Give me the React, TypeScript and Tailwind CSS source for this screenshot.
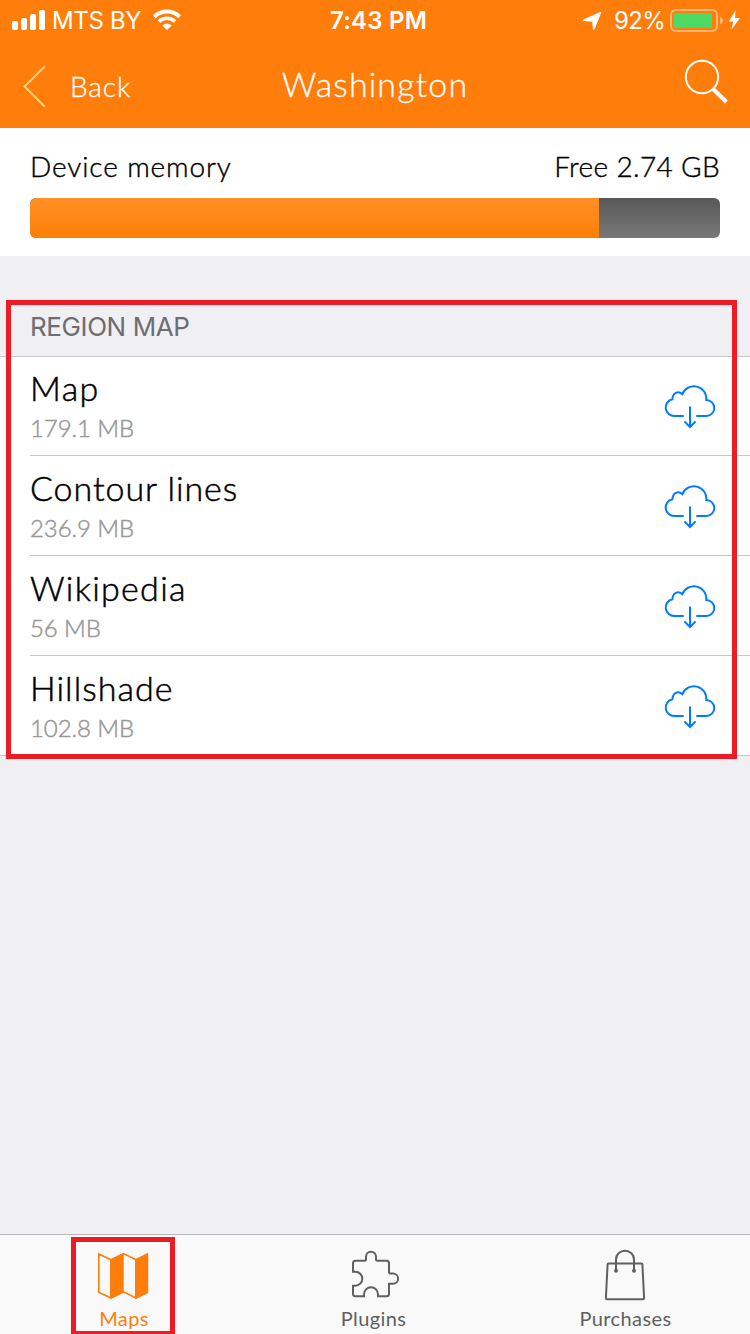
import type { ReactNode } from "react";

const LATO = "font-['Lato','Open_Sans',sans-serif]";
const INTER = "font-['Inter','Liberation_Sans',sans-serif]";

const regions = [
  { name: "Map", size: "179.1 MB", track: "tracking-[1.4px]" },
  { name: "Contour lines", size: "236.9 MB", track: "tracking-[0.95px]" },
  { name: "Wikipedia", size: "56 MB", track: "tracking-[1.3px]" },
  { name: "Hillshade", size: "102.8 MB", track: "tracking-[1.05px]" },
];

function StatusBar() {
  return (
    <div className={`flex h-10 items-center text-[24px] leading-[40px] text-white ${INTER}`}>
      <div className="flex w-[300px] items-center pl-3">
        <svg width="34" height="40" viewBox="12 0 34 40" fill="currentColor">
          <rect x="12" y="21" width="6" height="9" rx="1.8" />
          <rect x="21" y="18" width="6" height="12" rx="1.8" />
          <rect x="30" y="14" width="6" height="16" rx="1.8" />
          <rect x="39" y="10" width="6" height="20" rx="1.8" />
        </svg>
        <span className="ml-[6px] h-[40px] w-[94px] translate-y-px whitespace-nowrap tracking-[-0.35px]">MTS BY</span>
        <svg className="ml-[6px]" width="30" height="40" viewBox="152 0 30 40" fill="none" stroke="currentColor">
          <path d="M154.3 16.7a18.2 18.2 0 0 1 25.4 0" strokeWidth="4" />
          <path d="M159 21.5a11.6 11.6 0 0 1 16 0" strokeWidth="3.6" />
          <path d="M162.2 25.4a7 7 0 0 1 9.6 0L167 30z" fill="currentColor" stroke="none" />
        </svg>
      </div>
      <div className="w-[157px] translate-y-px whitespace-nowrap text-center font-semibold tracking-[0.2px]">
        7:43 PM
      </div>
      <div className="flex flex-1 items-center justify-end pr-[10px]">
        <svg width="20" height="40" viewBox="582 0 20 40" fill="currentColor">
          <path d="M583.4 19.4 600.2 12.1Q601.6 11.6 601.1 13L594.6 29.2Q593.7 30.6 593 29.2L592.2 21.7 583.6 21Q582 20.3 583.4 19.4z" />
        </svg>
        <span className="ml-3 h-[40px] w-[56px] translate-y-px whitespace-nowrap tracking-[-0.6px]">92%</span>
        <svg width="70" height="40" viewBox="670 0 70 40">
          <rect x="671" y="10" width="46" height="21" rx="5" fill="none" stroke="#ffb673" strokeWidth="2" />
          <rect x="673.7" y="13" width="38.3" height="15" rx="1" fill="#4cd964" />
          <path d="M720 16.5q3 1.4 3 4t-3 4z" fill="#ffb673" />
          <path d="M735.5 10.5 728.8 21.4h4.4L731.5 29.6 740 18h-4.9z" fill="#fff" />
        </svg>
      </div>
    </div>
  );
}

function NavBar() {
  return (
    <div className={`flex h-[88px] items-start justify-between text-white [-webkit-text-stroke:0.3px] ${LATO}`}>
      <div className="flex w-[250px] pl-[22px]">
        <svg width="24" height="44" viewBox="22 64 24 44" className="mt-6" fill="none" stroke="#ffd480" strokeWidth="2">
          <path d="m44.8 66.3-20.2 20.2 20.2 20.2" />
        </svg>
        <span className="ml-6 mt-[26px] whitespace-nowrap text-[28px] font-light leading-[40px] tracking-[0.9px]">Back</span>
      </div>
      <h1 className="mt-6 w-[250px] whitespace-nowrap text-center text-[34px] font-light leading-[40px] tracking-[1.1px]">
        Washington
      </h1>
      <div className="flex w-[250px] justify-end pr-5">
        <svg width="46" height="46" viewBox="684 59 46 46" className="mt-[19px]" fill="none" stroke="currentColor">
          <circle cx="702" cy="77" r="16.2" strokeWidth="2" />
          <path d="m712.8 88.8 13.6 13.2" strokeWidth="4" />
        </svg>
      </div>
    </div>
  );
}

function MemoryPanel() {
  return (
    <section className={`h-32 bg-white px-[30px] text-black ${LATO}`}>
      <div className="flex justify-between whitespace-nowrap pt-[18px] text-[28px] font-light leading-[40px] [-webkit-text-stroke:0.4px]">
        <span className="tracking-[0.9px]">Device memory</span>
        <span className="tracking-[0.35px]">Free 2.74 GB</span>
      </div>
      <div className="mt-3 flex h-10 overflow-hidden rounded-[6px] bg-linear-to-b from-[#585858] to-[#787878]">
        <div className="w-[569px] bg-linear-to-b from-[#ff9024] to-[#ff8000]" />
      </div>
    </section>
  );
}

function CloudDownload() {
  return (
    <svg width="52" height="46" viewBox="0 0 52 46" fill="none" stroke="#007aff" strokeWidth="2">
      <path d="M19.7 32H10.6A8.5 8.5 0 0 1 8.4 15.2C8.8 8.6 14 6.5 18.4 10.2A12.4 12.4 0 0 1 42.3 16A8 8 0 0 1 42.3 32H32.3" />
      <path d="M26 22.6V43M20.4 37.4 26 43l5.6-5.6" />
    </svg>
  );
}

function RegionList() {
  return (
    <section>
      <h2 className={`h-[100px] whitespace-nowrap pl-[30px] pt-[51px] text-[26px] leading-[40px] tracking-[-0.4px] text-[#6d6d72] ${INTER}`}>
        REGION MAP
      </h2>
      <ul className={`bg-white pl-[30px] shadow-[inset_0_1px_0_#c8c7cc,inset_0_-1px_0_#c8c7cc] ${LATO}`}>
        {regions.map((r) => (
          <li key={r.name} className="flex h-[100px] justify-between border-b border-[#c8c7cc] pr-[34px]">
            <div className="whitespace-nowrap pt-3 font-light [-webkit-text-stroke:0.5px]">
              <p className={`text-[34px] leading-[40px] text-black ${r.track}`}>{r.name}</p>
              <p className="mt-[5px] text-[24px] leading-[30px] tracking-[-0.1px] text-[#999]">{r.size}</p>
            </div>
            <div className="pt-7">
              <CloudDownload />
            </div>
          </li>
        ))}
      </ul>
    </section>
  );
}

function Tab({ label, className, labelClass, children }: { label: string; className: string; labelClass: string; children: ReactNode }) {
  return (
    <div className={`flex flex-col items-center pt-[14px] ${className}`}>
      {children}
      <span className={`mt-[2px] whitespace-nowrap text-[20px] leading-[30px] tracking-[0.4px] ${labelClass}`}>{label}</span>
    </div>
  );
}

function TabBar() {
  return (
    <nav className={`grid h-[100px] grid-cols-3 border-t border-[#b9b8be] bg-[#f9f9f9] ${LATO}`}>
      <Tab label="Maps" className="pr-1 text-[#ff7d0a]" labelClass="pl-[2px]">
        <svg width="52" height="52" viewBox="97 1249 52 52" fill="currentColor">
          <path
            d="M98.8 1254 111 1259.8 123.5 1253.6 136 1259.8 147.4 1254V1292.5L136 1298 123.5 1291.8 111 1298 98.8 1292.3z"
            fill="none"
            stroke="currentColor"
            strokeWidth="1.6"
          />
          <path d="M110 1259.8 123.7 1253V1292L111 1298.5H110zM135 1259.8 148 1253V1292.7L136 1298.6H135z" />
        </svg>
      </Tab>
      <Tab label="Plugins" className="text-[#606060]" labelClass="pr-[3px]">
        <svg width="50" height="52" viewBox="0 0 50 52" fill="none" stroke="currentColor" strokeWidth="2">
          <path d="M3 22.7V14.2Q3 11.7 5.5 11.7H14.5Q16 11.7 16 10.2V7.7A5 5 0 0 1 26 7.7V10.2Q26 11.7 27.5 11.7H36.5Q39 11.7 39 14.2V22.8Q39 24.6 40.8 24.6H43A5.1 5.1 0 0 1 43 34.8H39V44.8Q39 47.3 36.5 47.3H28V45.3A7 7 0 0 0 14 45.3V47.3H5.5Q3 47.3 3 44.8V36.7H5.3A7 7 0 0 0 5.3 22.7z" />
        </svg>
      </Tab>
      <Tab label="Purchases" className="text-[#606060]" labelClass="pl-px">
        <svg width="42" height="52" viewBox="0 0 42 52" fill="none" stroke="currentColor" strokeWidth="2">
          <path d="M4.6 14.4H37.4Q38.4 14.4 38.4 15.4L40.1 49Q40.1 50.3 39 50.3H3Q1.9 50.3 1.9 49L3.6 15.4Q3.6 14.4 4.6 14.4z" />
          <path d="M12 21.5V10.4A9 8.6 0 0 1 30 10.4V21.5" />
          <circle cx="12" cy="21.7" r="2" fill="currentColor" stroke="none" />
          <circle cx="30" cy="21.7" r="2" fill="currentColor" stroke="none" />
        </svg>
      </Tab>
    </nav>
  );
}

export default function App() {
  return (
    <div className="relative flex h-[1334px] w-[750px] flex-col overflow-hidden bg-[#efeff4]">
      <header className="h-32 bg-[#ff7d0a]">
        <StatusBar />
        <NavBar />
      </header>
      <MemoryPanel />
      <main className="flex-1">
        <RegionList />
      </main>
      <TabBar />
      <div className="pointer-events-none absolute left-[6px] top-[300px] h-[459px] w-[731px] border-[5px] border-[#ed1c24]" />
      <div className="pointer-events-none absolute left-[71px] top-[1237px] h-[99px] w-[104px] border-[5px] border-[#ed1c24]" />
    </div>
  );
}
